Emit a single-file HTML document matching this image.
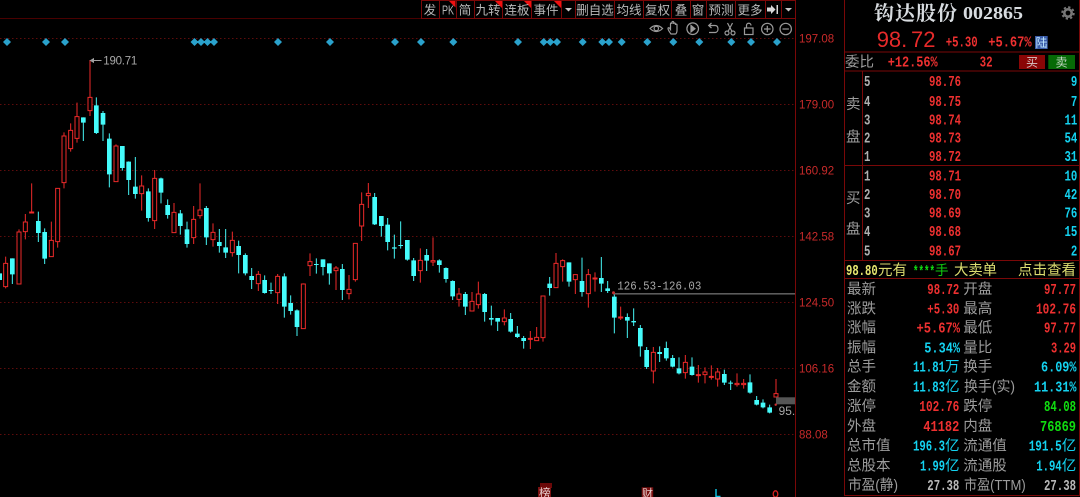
<!DOCTYPE html>
<html><head><meta charset="utf-8">
<style>
html,body{margin:0;padding:0;background:#000;width:1080px;height:497px;overflow:hidden}
svg{display:block}
text{font-family:"Liberation Sans","Noto Sans CJK SC",sans-serif}
.cw{stroke:#45f5f5;stroke-width:3;fill:none}
.cb{stroke:#45fbfb;stroke-width:14;fill:none}
.rw{stroke:#ee2a2a;stroke-width:3;fill:none}
.rb{stroke:#ee2a2a;stroke-width:3;fill:#000}
.ax{fill:#c82a2a;font-size:11.5px}
.t{fill:#b8b8b8;font-size:12.5px;text-anchor:middle}
.l{fill:#9c9c9c;font-size:14.5px}
.n{font-family:"Liberation Mono",monospace;font-weight:bold;font-size:15px;text-anchor:end}
.r{fill:#ee3030}.c{fill:#14d2f0}.g{fill:#10dd10}.w{fill:#b8b8b8}
.i{fill:#b0b0b0;font-family:"Liberation Mono",monospace;font-weight:bold;font-size:15px}
.y{fill:#dcdc70;font-size:14.5px}
.ln{stroke:#7a0808;stroke-width:1;fill:none}
.ic{stroke:#9a9a9a;stroke-width:1.2;fill:none}
</style></head><body>
<svg width="1080" height="497" viewBox="0 0 1080 497" xmlns="http://www.w3.org/2000/svg">
<rect width="1080" height="497" fill="#000"/>

<!-- grid -->
<g stroke="#5e0c0c" stroke-width="1" stroke-dasharray="1.5 2.5" fill="none">
<path d="M0 38.5H795M0 104.5H795M0 170.5H795M0 236.5H795M0 302.5H795M0 368.5H795M0 434.5H795"/>
</g>

<!-- toolbar -->
<path stroke="#4a0000" stroke-width="1" fill="none" d="M0 18.5H421"/>
<path class="ln" d="M421 18.5H795M421.5 .5H795M421.5 0V18M439.5 0V18M456.5 0V18M474.5 0V18M502.5 0V18M531.5 0V18M561.5 0V18M575.5 0V18M614.5 0V18M643.5 0V18M671.5 0V18M690.5 0V18M706.5 0V18M735.5 0V18M765.5 0V18M781.5 0V18M795.5 0V497"/>
<path fill="#f01010" d="M449 1h6.500v6.500zM495 1h7v7zM524 1h7v7zM554 1h7v7z"/>
<text class="t" x="430" y="14.500">发</text>
<text class="t" x="448" y="14.500" font-size="11" textLength="12" lengthAdjust="spacingAndGlyphs">PK</text>
<text class="t" x="465" y="14.500">简</text>
<text class="t" x="488" y="14.500">九转</text>
<text class="t" x="517" y="14.500">连板</text>
<text class="t" x="546" y="14.500">事件</text>
<path fill="#c8c8c8" d="M565 8h7l-3.500 3.500z"/>
<text class="t" x="595" y="14.500">删自选</text>
<text class="t" x="629" y="14.500">均线</text>
<text class="t" x="657.500" y="14.500">复权</text>
<text class="t" x="681" y="14.500">叠</text>
<text class="t" x="698" y="14.500">窗</text>
<text class="t" x="721" y="14.500">预测</text>
<text class="t" x="750" y="14.500">更多</text>
<path fill="#d8d8d8" d="M767 7.500h4V5l4.500 4.500-4.500 4.500v-2.500h-4zM776.500 5h1.500v9h-1.500z"/>
<path fill="#c8c8c8" d="M785 8h7l-3.500 3.500z"/>

<!-- tool icons -->
<g class="ic">
<path d="M650 28.500q6.300-6 12.600 0q-6.300 6-12.600 0z"/><circle cx="656.300" cy="28.500" r="2.200"/>
<path d="M671 34c-1.500-2-3-4-3-5.500 0-1 1.200-1 1.800 0l.7 1V24c0-1.300 1.500-1.300 1.500 0v-1.500c0-1.300 1.700-1.300 1.700 0V24c0-1.300 1.700-1.300 1.700 0v1c0-1.200 1.600-1.200 1.600 0v5.500c0 2-1 3.500-1.500 3.500z"/>
<circle cx="692.700" cy="28.700" r="5.800"/><path d="M691 25.500l4 3.200-4 3.200z" fill="#9a9a9a"/>
<path d="M709 25.500h6c2.500 0 3 1.800 3 3.500s-1 3.500-3 3.500h-6M711.500 23l-2.800 2.500 2.800 2.500"/>
<circle cx="727" cy="33" r="2"/><circle cx="733" cy="33" r="2"/><path d="M728 31.500l4.500-8.500M732 31.500l-4.500-8.500"/>
<rect x="744.500" y="28" width="8.500" height="6.500"/><path d="M746.500 28v-2.500c0-3 4.500-3 4.500 0"/>
<circle cx="767.300" cy="29" r="5.700"/><path d="M764 29h6.600M767.300 25.700v6.600"/>
<circle cx="785.700" cy="29" r="5.700"/><path d="M782.500 29h6.400"/>
</g>

<!-- diamonds -->
<g fill="#2aa2cc">
<path d="M7 38l4 4-4 4-4-4zM46 38l4 4-4 4-4-4zM65 38l4 4-4 4-4-4zM194.500 38l4 4-4 4-4-4zM201 38l4 4-4 4-4-4zM207.500 38l4 4-4 4-4-4zM214 38l4 4-4 4-4-4zM278 38l4 4-4 4-4-4zM330 38l4 4-4 4-4-4zM395 38l4 4-4 4-4-4zM421 38l4 4-4 4-4-4zM453.300 38l4 4-4 4-4-4zM518 38l4 4-4 4-4-4zM543.700 38l4 4-4 4-4-4zM550.300 38l4 4-4 4-4-4zM557 38l4 4-4 4-4-4zM582.700 38l4 4-4 4-4-4zM602.300 38l4 4-4 4-4-4zM609 38l4 4-4 4-4-4zM621.700 38l4 4-4 4-4-4zM647.300 38l4 4-4 4-4-4zM673.300 38l4 4-4 4-4-4zM699.300 38l4 4-4 4-4-4zM731.300 38l4 4-4 4-4-4zM751 38l4 4-4 4-4-4zM777 38l4 4-4 4-4-4z"/>
</g>

<!-- candles A -->
<g transform="translate(0,30) scale(.33333)">
<path class="cw" d="M37 685V762M115 545V636M134 595V702M250 262V333M289 202V312M309 243V333M328 310V472M367 348V422M386 394V495M406 381V506M445 475V575M483 443V520M503 508V566M541 540V614M561 575V653M619 528V645"/>
<path class="cb" d="M-1 730V750M37 685V733M115 573V609M134 606V686M250 262V278M289 226V309M309 249V284M328 326V433M367 348V414M386 395V450M406 470V492M445 484V564M483 445V488M503 525V555M541 550V588M561 598V642M619 534V622"/>
<path class="rw" d="M17 680V775M57 598V762M76 552V628M95 460V550M154 575V680M173 475V653M192 307V475M212 280V365M231 218V338M270 90V258M348 343V455M425 436V542M464 420V597M522 519V608M581 528V642M600 460V566"/>
<path class="rb" d="M11 700h12v70h-12zM51 606h12v156h-12zM70 576h12v29h-12zM89 546h12v3h-12zM148 631h12v49h-12zM167 475h12v160h-12zM186 318h12v140h-12zM206 301h12v55h-12zM225 260h12v65h-12zM264 202h12v40h-12zM342 348h12v107h-12zM419 468h12v23h-12zM458 445h12v127h-12zM516 547h12v61h-12zM575 568h12v55h-12zM594 540h12v17h-12z"/>
</g>
<!-- candles B -->
<g transform="translate(200,170) scale(.33333)">
<path class="cw" d="M58 177V248M77 177V264M116 212V310M136 250V316M155 294V357M194 316V371M213 338V372M253 310V443M272 376V434M291 418V498M349 265V311M369 268V316M388 280V344M427 282V390M524 69V165M544 138V200M563 144V241M583 194V266M602 154V236M622 210V272"/>
<path class="cb" d="M58 216V228M77 232V248M116 228V255M136 255V310M155 318V330M194 330V369M213 360V363M253 319V410M272 399V423M291 421V471M349 282V285M369 268V291M388 280V310M427 297V360M524 81V163M544 138V168M563 164V216M583 232V236M602 225V228M622 210V269"/>
<path class="rw" d="M39 160V230M97 185V260M175 303V363M233 312V402M310 340V476M330 250V318M408 288V360M447 315V388M466 220V335M485 67V213M505 39V114"/>
<path class="rb" d="M33 187h12v22h-12zM91 211h12v37h-12zM169 313h12v28h-12zM227 319h12v49h-12zM304 342h12v134h-12zM324 275h12v12h-12zM402 294h12v8h-12zM441 358h12v13h-12zM460 220h12v109h-12zM479 103h12v65h-12zM499 70h12v7h-12z"/>
</g>
<!-- candles C -->
<g transform="translate(340,170) scale(.33333)">
<path class="cw" d="M221 264V333M260 237V303M298 268V308M318 292V338M338 331V390M376 366V435M434 369V455M454 407V466M473 444V483M512 429V488M532 468V504M551 498V536"/>
<path class="cb" d="M221 271V318M260 255V272M298 271V285M318 294V327M338 333V379M376 372V410M434 372V426M454 444V449M473 444V455M512 447V485M532 491V501M551 504V513"/>
<path class="rw" d="M241 235V338M279 202V288M357 354V410M396 366V424M415 335V416M493 418V466M571 483V537M590 471V513"/>
<path class="rb" d="M235 271h12v31h-12zM273 272h12v4h-12zM351 372h12v16h-12zM390 394h12v29h-12zM409 372h12v32h-12zM487 444h12v11h-12zM565 505h12v3h-12zM584 502h12v10h-12z"/>
</g>
<!-- candles D -->
<g transform="translate(520,240) scale(.33333)">
<path class="cw" d="M89 111V167M147 67V140M186 53V170M244 51V156M263 123V159M283 160V280M322 220V294M341 205V258M361 255V350M380 321V387M419 319V366M439 305V362"/>
<path class="cb" d="M89 131V144M147 67V125M186 123V156M244 114V131M263 145V153M283 170V233M322 231V242M341 243V247M361 264V319M380 330V381M419 336V342M439 324V355"/>
<path class="rw" d="M69 167V305M108 39V144M128 58V125M166 103V162M205 87V203M225 97V155M302 200V240M400 321V430"/>
<path class="rb" d="M63 168h12v125h-12zM102 70h12v73h-12zM122 62h12v18h-12zM160 104h12v15h-12zM199 104h12v57h-12zM219 114h12v3h-12zM296 231h12v3h-12zM394 337h12v56h-12z"/>
</g>
<!-- candles E -->
<g transform="translate(640,330) scale(.33333)">
<path class="cw" d="M98 75V112M117 82V133M156 82V137M253 119V165M272 152V180M330 133V191M350 198V226M369 208V235M389 224V250"/>
<path class="cb" d="M98 84V110M117 115V130M156 110V135M253 132V158M272 158V161M330 157V188M350 210V224M369 218V232M389 232V248"/>
<path class="rw" d="M136 75V146M175 105V158M195 112V160M214 106V149M233 114V170M291 130V170M311 147V176M408 147V200"/>
<path class="rb" d="M130 97h12v31h-12zM169 134h12v3h-12zM189 126h12v8h-12zM208 139h12v3h-12zM227 126h12v21h-12zM285 160h12v4h-12zM305 160h12v4h-12zM402 191h12v10h-12z"/>
</g>

<!-- chart annotations -->
<path d="M90.500 60.500H101.500M90.500 60.500l3-1.800v3.600z" stroke="#a0a0a0" stroke-width="1" fill="#a0a0a0"/>
<text x="103.300" y="64.500" fill="#a8a8a8" font-size="11.500" textLength="34">190.71</text>
<rect x="613" y="293" width="182" height="1.600" fill="#5c5c5c"/>
<circle cx="613.500" cy="292.800" r="1.500" fill="#c03030"/>
<text x="617.300" y="289.500" fill="#a8a8a8" font-size="11.500" style="font-family:'Liberation Mono',monospace" textLength="84" lengthAdjust="spacingAndGlyphs">126.53-126.03</text>
<rect x="776" y="397.300" width="19" height="7" fill="#555"/>
<circle cx="775.700" cy="404.700" r="1.200" fill="#d03030"/>
<text x="778.700" y="415" fill="#a8a8a8" font-size="11.500" textLength="16.500" lengthAdjust="spacingAndGlyphs">95.</text>

<!-- axis labels -->
<text class="ax" x="799" y="42.500">197.08</text>
<text class="ax" x="799" y="108.500">179.00</text>
<text class="ax" x="799" y="174.500">160.92</text>
<text class="ax" x="799" y="240.500">142.58</text>
<text class="ax" x="799" y="306.500">124.50</text>
<text class="ax" x="799" y="372.500">106.16</text>
<text class="ax" x="799" y="438.500">88.08</text>

<!-- bottom markers -->
<rect x="540" y="483" width="12" height="5" fill="#6a0808"/>
<rect x="538" y="487" width="13" height="10" fill="#7a1010"/>
<text x="539" y="497" fill="#e8d0d0" font-size="11.500">榜</text>
<rect x="641.700" y="487.300" width="11.500" height="10" fill="#7a1010"/>
<text x="642" y="497" fill="#e8d0d0" font-size="11">财</text>
<path d="M716 489v7.500h4.500" stroke="#10c8e8" stroke-width="1.400" fill="none"/>
<ellipse cx="775.500" cy="494" rx="2.300" ry="3.200" fill="none" stroke="#d82020" stroke-width="1.300"/>

<!-- right panel frame -->
<path class="ln" d="M844.500 0V495.500H1079.500V0M844 52H1080M844 71H1080M844 165.500H1080M844 260.500H1080M844 278.500H1080M862.500 71V260"/>

<text x="874" y="20" fill="#d8dce0" font-size="20" font-weight="bold" style="font-family:'Liberation Serif','Noto Serif CJK SC',serif" textLength="83">钩达股份</text>
<text x="963" y="19" fill="#d8dce0" font-size="18" font-weight="bold" style="font-family:'Liberation Serif',serif" textLength="60" lengthAdjust="spacingAndGlyphs">002865</text>
<circle cx="1068" cy="13" r="3.700" fill="none" stroke="#777" stroke-width="2.600"/>
<circle cx="1068" cy="13" r="5.800" fill="none" stroke="#777" stroke-width="1.800" stroke-dasharray="2.300 2.250"/>

<text x="876.700" y="47" fill="#e62a2a" font-size="22">98.</text>
<text x="911" y="47" fill="#e62a2a" font-size="22">72</text>
<text class="n r" x="977.700" y="46.500" textLength="32" lengthAdjust="spacingAndGlyphs">+5.30</text>
<text class="n r" x="1031.700" y="46.500" textLength="43.500" lengthAdjust="spacingAndGlyphs">+5.67%</text>
<rect x="1035" y="36" width="12.700" height="13" fill="#3a5caa"/>
<text x="1035.500" y="47" fill="#bfe8ff" font-size="12">陆</text>

<text class="l" x="845" y="67" textLength="29">委比</text>
<text class="n r" x="937.700" y="66.500" textLength="50" lengthAdjust="spacingAndGlyphs">+12.56%</text>
<text class="n r" x="992.600" y="66.500" textLength="13" lengthAdjust="spacingAndGlyphs">32</text>
<rect x="1019" y="55" width="26" height="14" fill="#8a0606"/>
<text x="1026" y="66.500" fill="#d8c8c8" font-size="12">买</text>
<rect x="1048.300" y="55" width="26.700" height="14" fill="#066a06"/>
<text x="1055.500" y="66.500" fill="#c8d8c8" font-size="12">卖</text>

<text class="l" x="846" y="109">卖</text>
<text class="l" x="846" y="142">盘</text>
<text class="l" x="846" y="203">买</text>
<text class="l" x="846" y="234">盘</text>

<!-- order book -->
<text class="i" x="864" y="86" textLength="6.400" lengthAdjust="spacingAndGlyphs">5</text>
<text class="n r" x="961" y="86" textLength="32" lengthAdjust="spacingAndGlyphs">98.76</text>
<text class="n c" x="1077.300" y="86" textLength="6.400" lengthAdjust="spacingAndGlyphs">9</text>
<text class="i" x="864" y="106" textLength="6.400" lengthAdjust="spacingAndGlyphs">4</text>
<text class="n r" x="961" y="106" textLength="32" lengthAdjust="spacingAndGlyphs">98.75</text>
<text class="n c" x="1077.300" y="106" textLength="6.400" lengthAdjust="spacingAndGlyphs">7</text>
<text class="i" x="864" y="124.300" textLength="6.400" lengthAdjust="spacingAndGlyphs">3</text>
<text class="n r" x="961" y="124.300" textLength="32" lengthAdjust="spacingAndGlyphs">98.74</text>
<text class="n c" x="1077.300" y="124.300" textLength="12.800" lengthAdjust="spacingAndGlyphs">11</text>
<text class="i" x="864" y="142.700" textLength="6.400" lengthAdjust="spacingAndGlyphs">2</text>
<text class="n r" x="961" y="142.700" textLength="32" lengthAdjust="spacingAndGlyphs">98.73</text>
<text class="n c" x="1077.300" y="142.700" textLength="12.800" lengthAdjust="spacingAndGlyphs">54</text>
<text class="i" x="864" y="161" textLength="6.400" lengthAdjust="spacingAndGlyphs">1</text>
<text class="n r" x="961" y="161" textLength="32" lengthAdjust="spacingAndGlyphs">98.72</text>
<text class="n c" x="1077.300" y="161" textLength="12.800" lengthAdjust="spacingAndGlyphs">31</text>

<text class="i" x="864" y="180.700" textLength="6.400" lengthAdjust="spacingAndGlyphs">1</text>
<text class="n r" x="961" y="180.700" textLength="32" lengthAdjust="spacingAndGlyphs">98.71</text>
<text class="n c" x="1077.300" y="180.700" textLength="12.800" lengthAdjust="spacingAndGlyphs">10</text>
<text class="i" x="864" y="199" textLength="6.400" lengthAdjust="spacingAndGlyphs">2</text>
<text class="n r" x="961" y="199" textLength="32" lengthAdjust="spacingAndGlyphs">98.70</text>
<text class="n c" x="1077.300" y="199" textLength="12.800" lengthAdjust="spacingAndGlyphs">42</text>
<text class="i" x="864" y="217.300" textLength="6.400" lengthAdjust="spacingAndGlyphs">3</text>
<text class="n r" x="961" y="217.300" textLength="32" lengthAdjust="spacingAndGlyphs">98.69</text>
<text class="n c" x="1077.300" y="217.300" textLength="12.800" lengthAdjust="spacingAndGlyphs">76</text>
<text class="i" x="864" y="236" textLength="6.400" lengthAdjust="spacingAndGlyphs">4</text>
<text class="n r" x="961" y="236" textLength="32" lengthAdjust="spacingAndGlyphs">98.68</text>
<text class="n c" x="1077.300" y="236" textLength="12.800" lengthAdjust="spacingAndGlyphs">15</text>
<text class="i" x="864" y="255.300" textLength="6.400" lengthAdjust="spacingAndGlyphs">5</text>
<text class="n r" x="961" y="255.300" textLength="32" lengthAdjust="spacingAndGlyphs">98.67</text>
<text class="n c" x="1077.300" y="255.300" textLength="6.400" lengthAdjust="spacingAndGlyphs">2</text>

<!-- big order row -->
<text class="n" x="877.700" y="275" fill="#e8e870" textLength="31.700" lengthAdjust="spacingAndGlyphs">98.80</text>
<text class="y" x="878" y="275" textLength="29">元有</text>
<text class="n g" x="935" y="276" textLength="22" lengthAdjust="spacingAndGlyphs">****</text>
<text x="935" y="275" fill="#10cc10" font-size="13.500">手</text>
<text class="y" x="954" y="275" textLength="43">大卖单</text>
<text class="y" x="1018" y="275" textLength="58">点击查看</text>

<!-- stats -->
<text class="l" x="847" y="294">最新</text><text class="n r" x="959.300" y="294" textLength="32" lengthAdjust="spacingAndGlyphs">98.72</text>
<text class="l" x="963.300" y="294">开盘</text><text class="n r" x="1076" y="294" textLength="32" lengthAdjust="spacingAndGlyphs">97.77</text>
<text class="l" x="847" y="313.300">涨跌</text><text class="n r" x="959.300" y="313.300" textLength="32" lengthAdjust="spacingAndGlyphs">+5.30</text>
<text class="l" x="963.300" y="313.300">最高</text><text class="n r" x="1076" y="313.300" textLength="40" lengthAdjust="spacingAndGlyphs">102.76</text>
<text class="l" x="847" y="332.700">涨幅</text><text class="n r" x="960" y="332.700" textLength="43.500" lengthAdjust="spacingAndGlyphs">+5.67%</text>
<text class="l" x="963.300" y="332.700">最低</text><text class="n r" x="1076" y="332.700" textLength="32" lengthAdjust="spacingAndGlyphs">97.77</text>
<text class="l" x="847" y="352.300">振幅</text><text class="n c" x="960" y="352.300" textLength="35.700" lengthAdjust="spacingAndGlyphs">5.34%</text>
<text class="l" x="963.300" y="352.300">量比</text><text class="n r" x="1076" y="352.300" textLength="25" lengthAdjust="spacingAndGlyphs">3.29</text>
<text class="l" x="847" y="371.700">总手</text><text class="n c" x="945" y="371.700" textLength="32" lengthAdjust="spacingAndGlyphs">11.81</text><text x="945" y="371.700" class="c" font-size="14.500">万</text>
<text class="l" x="963.300" y="371.700">换手</text><text class="n c" x="1076.500" y="371.700" textLength="35.500" lengthAdjust="spacingAndGlyphs">6.09%</text>
<text class="l" x="847" y="391.700">金额</text><text class="n c" x="945" y="391.700" textLength="32" lengthAdjust="spacingAndGlyphs">11.83</text><text x="945" y="391.700" class="c" font-size="14.500">亿</text>
<text class="l" x="964" y="391.700" textLength="51" lengthAdjust="spacingAndGlyphs">换手(实)</text><text class="n c" x="1076.500" y="391.700" textLength="42.500" lengthAdjust="spacingAndGlyphs">11.31%</text>
<text class="l" x="847" y="411">涨停</text><text class="n r" x="959.300" y="411" textLength="40" lengthAdjust="spacingAndGlyphs">102.76</text>
<text class="l" x="963.300" y="411">跌停</text><text class="n g" x="1076" y="411" textLength="32" lengthAdjust="spacingAndGlyphs">84.08</text>
<text class="l" x="847" y="431">外盘</text><text class="n r" x="959.300" y="431" textLength="36" lengthAdjust="spacingAndGlyphs">41182</text>
<text class="l" x="963.300" y="431">内盘</text><text class="n g" x="1076" y="431" textLength="36" lengthAdjust="spacingAndGlyphs">76869</text>
<text class="l" x="847" y="450.700">总市值</text><text class="n c" x="945" y="450.700" textLength="32" lengthAdjust="spacingAndGlyphs">196.3</text><text x="945" y="450.700" class="c" font-size="14.500">亿</text>
<text class="l" x="963.300" y="450.700">流通值</text><text class="n c" x="1061.700" y="450.700" textLength="33" lengthAdjust="spacingAndGlyphs">191.5</text><text x="1061.700" y="450.700" class="c" font-size="14.500">亿</text>
<text class="l" x="847" y="470.700">总股本</text><text class="n c" x="945" y="470.700" textLength="25" lengthAdjust="spacingAndGlyphs">1.99</text><text x="945" y="470.700" class="c" font-size="14.500">亿</text>
<text class="l" x="963.300" y="470.700">流通股</text><text class="n c" x="1061.700" y="470.700" textLength="25.500" lengthAdjust="spacingAndGlyphs">1.94</text><text x="1061.700" y="470.700" class="c" font-size="14.500">亿</text>
<text class="l" x="848" y="490" textLength="50" lengthAdjust="spacingAndGlyphs">市盈(静)</text><text class="n w" x="959.300" y="490" textLength="32" lengthAdjust="spacingAndGlyphs">27.38</text>
<text class="l" x="964" y="490" textLength="61.700" lengthAdjust="spacingAndGlyphs">市盈(TTM)</text><text class="n w" x="1076" y="490" textLength="32" lengthAdjust="spacingAndGlyphs">27.38</text>
</svg>
</body></html>
